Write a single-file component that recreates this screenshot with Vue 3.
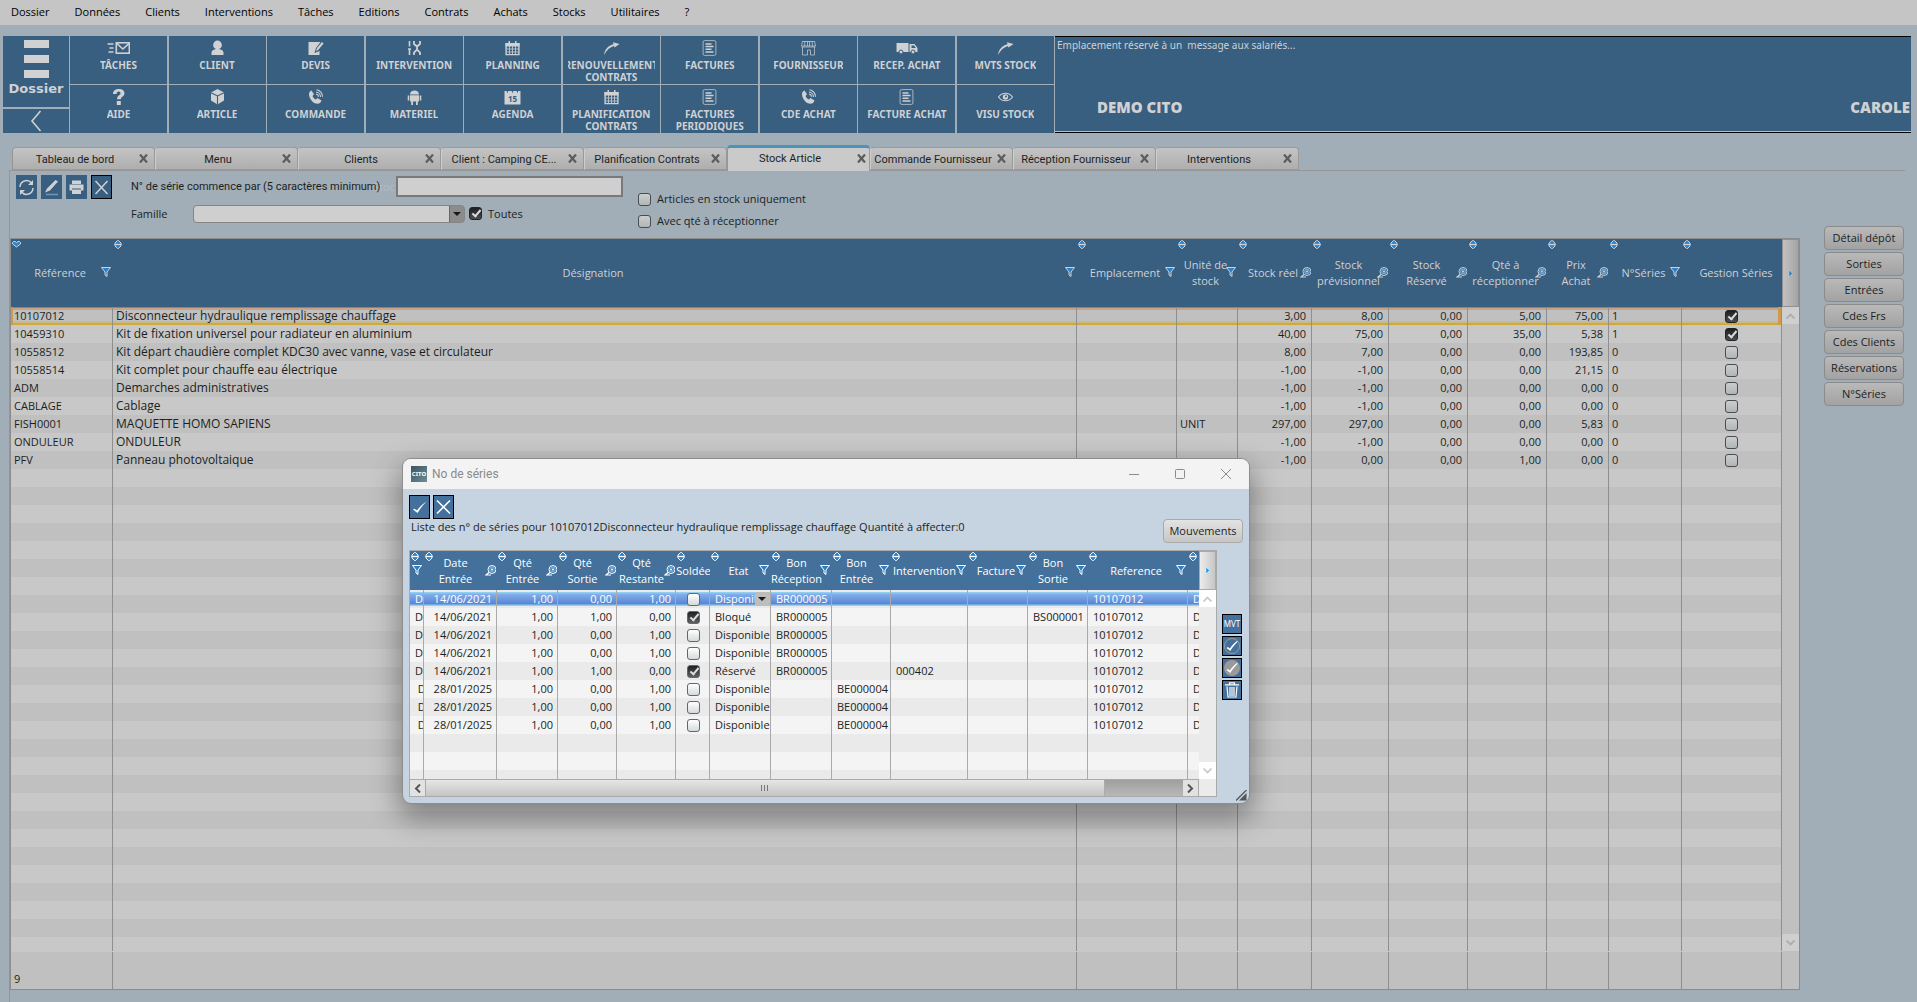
<script setup>
import { ref } from 'vue'

const icons = {
  mail: '<path d="M0 4h6M2 8h4M1 12h5" stroke="currentColor" stroke-width="1.600"/><rect x="8.800" y="2.800" width="13" height="10.400" fill="none" stroke="currentColor" stroke-width="1.600"/><path d="M9 3l6.300 6L22 3" fill="none" stroke="currentColor" stroke-width="1.600"/>',
  user: '<circle cx="11" cy="5" r="4.400" fill="currentColor"/><path d="M5 15v-2c0-3 3-4 6-4s6 1 6 4v2z" fill="currentColor"/>',
  quote: '<path d="M4 2h12l-4.500 6-1.500 5 4-1.500 1-1V15H4z" fill="currentColor"/><path d="M11.500 11.500l1-3.500 5-6 1.600 1.400-5 6.200z" fill="currentColor"/>',
  tools: '<path d="M6 1v5.500M6 9v6M4.500 9h3" fill="none" stroke="currentColor" stroke-width="1.600"/><path d="M10.500 1v3l3 2.500 3-2.500V1M10.500 15v-2.500l3-3 3 3V15M13.500 6v4" fill="none" stroke="currentColor" stroke-width="1.800"/>',
  calendar: '<path d="M4.600 3.600h12.800v11H4.600z" fill="none" stroke="currentColor" stroke-width="1.400"/><path d="M4 3h14v3.500H4zM7 1h1.500v3H7zM13.500 1H15v3h-1.500z" fill="currentColor"/><path d="M5 9h12M5 12h12M8 6v8M11 6v8M14 6v8" stroke="currentColor" stroke-width=".8"/>',
  share: '<path d="M3.500 15C4 9.500 8.500 5 13 4.300L12.500 2.300l6.500 1.700-5 3.400-.5-1.500C9.500 7 6 10 3.500 15z" fill="currentColor"/>',
  doc: '<rect x="4.600" y=".6" width="12.800" height="14.800" rx="1.500" fill="none" stroke="currentColor" stroke-width="1" opacity=".75"/><path d="M7 4h6M7 6.600h8M7 9.200h6M7 12h8" stroke="currentColor" stroke-width="1.500"/>',
  shop: '<path d="M5 1.500h12M5 1l-1 5h14l-1-5M7.500 1L7 6M10 1v5M12 1v5M14.500 1l.5 5M5 7v8h5v-5h3v5h4V7M4 7h14" fill="none" stroke="currentColor" stroke-width="1" opacity=".7"/>',
  truck: '<path d="M1 3h12v9H1zM14 4h5l3 4v4h-8z" fill="currentColor"/><path d="M16 5.500h2.500l1.800 2.500H16z" fill="#385e80"/><circle cx="5.500" cy="12" r="2" fill="currentColor" stroke="#385e80"/><circle cx="17.500" cy="12" r="2" fill="currentColor" stroke="#385e80"/>',
  help: '<path d="M5.500 5C5.500 1.500 8 0 11.300 0c3.200 0 5.700 1.500 5.700 4.300 0 3.300-3.700 3.500-3.700 6H9.500c0-3.700 3.500-4 3.500-6 0-1-.8-1.800-1.900-1.800-1.300 0-2 .9-2 2.500zM9.300 12h4v4h-4z" fill="currentColor"/>',
  cube: '<path d="M11 0l6.500 3.500v8L11 15.500l-6.500-4v-8z" fill="currentColor"/><path d="M4.500 3.800L11 7l6.500-3.200M11 7v8.500" fill="none" stroke="#385e80" stroke-width="1.100"/>',
  phone: '<path d="M4.500 5c0-1.500 1-3 2.500-3.500l2.500 3.800L8 7c.5 1.500 2 3 3.500 3.500L13 9l4 2.500c-.6 2-2 3.300-4 3.300C8.500 14.800 4.500 9.500 4.500 5z" fill="currentColor"/><path d="M11.500 5a3 3 0 0 1 2.500 2.800M11.500 3a5 5 0 0 1 4.500 5M12 .8a7 7 0 0 1 6 7" fill="none" stroke="currentColor" stroke-width="1.100"/>',
  android: '<path d="M6.500 5.500C6.500 3 8.500 1.500 11 1.500s4.500 1.500 4.500 4zM6.500 6.200h9v6.300h-1.200V16h-1.800v-3.500h-3V16H7.700v-3.500H6.500zM4.200 6.500h1.600v5H4.200zM16.200 6.500h1.600v5h-1.600z" fill="currentColor"/>',
  agenda: '<path d="M3 2h16v13.500H3z" fill="currentColor"/><path d="M6 0v3.500M11 0v3.500M16 0v3.500" stroke="#385e80" stroke-width="1.200"/><text x="11" y="13" text-anchor="middle" font-family="Noto Sans" font-weight="700" font-size="8" fill="#385e80">15</text>',
  eye: '<path d="M4 8c3.500-5 10.500-5 14 0-3.500 5-10.500 5-14 0z" fill="none" stroke="currentColor" stroke-width="1.100"/><circle cx="11" cy="8" r="2.700" fill="currentColor"/><circle cx="11.500" cy="7.500" r="1" fill="#385e80"/>',
}

const menu = ['Dossier', 'Données', 'Clients', 'Interventions', 'Tâches', 'Editions', 'Contrats', 'Achats', 'Stocks', 'Utilitaires', '?']

const tools = [
  ['mail', 'TÂCHES'], ['user', 'CLIENT'], ['quote', 'DEVIS'], ['tools', 'INTERVENTION'], ['calendar', 'PLANNING'],
  ['share', 'RENOUVELLEMENT\nCONTRATS'], ['doc', 'FACTURES'], ['shop', 'FOURNISSEUR'], ['truck', 'RECEP. ACHAT'], ['share', 'MVTS STOCK'],
  ['help', 'AIDE'], ['cube', 'ARTICLE'], ['phone', 'COMMANDE'], ['android', 'MATERIEL'], ['agenda', 'AGENDA'],
  ['calendar', 'PLANIFICATION\nCONTRATS'], ['doc', 'FACTURES\nPERIODIQUES'], ['phone', 'CDE ACHAT'], ['doc', 'FACTURE ACHAT'], ['eye', 'VISU STOCK'],
]

const tabs = ['Tableau de bord', 'Menu', 'Clients', 'Client : Camping CE...', 'Planification Contrats', 'Stock Article', 'Commande Fournisseur', 'Réception Fournisseur', 'Interventions']
const activeTab = ref('Stock Article')

const cols = [
  { t: 'Référence', w: 102, f: 'funnel', sorted: true },
  { t: 'Désignation', f: 'funnel', cls: 'wide' },
  { t: 'Emplacement', w: 100, f: 'funnel' },
  { t: 'Unité de\nstock', w: 61, f: 'funnel' },
  { t: 'Stock réel', w: 74, f: 'lens', cls: 'num' },
  { t: 'Stock\nprévisionnel', w: 77, f: 'lens', cls: 'num' },
  { t: 'Stock\nRéservé', w: 79, f: 'lens', cls: 'num' },
  { t: 'Qté à\nréceptionner', w: 79, f: 'lens', cls: 'num' },
  { t: 'Prix\nAchat', w: 62, f: 'lens', cls: 'num' },
  { t: 'N°Séries', w: 73, f: 'funnel' },
  { t: 'Gestion Séries', w: 100, cls: 'check' },
]

const rows = [
  ['10107012', 'Disconnecteur hydraulique remplissage chauffage', '', '', '3,00', '8,00', '0,00', '5,00', '75,00', '1', true],
  ['10459310', 'Kit de fixation universel pour radiateur en aluminium', '', '', '40,00', '75,00', '0,00', '35,00', '5,38', '1', true],
  ['10558512', 'Kit départ chaudière complet KDC30 avec vanne, vase et circulateur', '', '', '8,00', '7,00', '0,00', '0,00', '193,85', '0', false],
  ['10558514', 'Kit complet pour chauffe eau électrique', '', '', '-1,00', '-1,00', '0,00', '0,00', '21,15', '0', false],
  ['ADM', 'Demarches administratives', '', '', '-1,00', '-1,00', '0,00', '0,00', '0,00', '0', false],
  ['CABLAGE', 'Cablage', '', '', '-1,00', '-1,00', '0,00', '0,00', '0,00', '0', false],
  ['FISH0001', 'MAQUETTE HOMO SAPIENS', '', 'UNIT', '297,00', '297,00', '0,00', '0,00', '5,83', '0', false],
  ['ONDULEUR', 'ONDULEUR', '', '', '-1,00', '-1,00', '0,00', '0,00', '0,00', '0', false],
  ['PFV', 'Panneau photovoltaique', '', '', '-1,00', '0,00', '0,00', '1,00', '0,00', '0', false],
]
const emptyRows = 27

const side = ['Détail dépôt', 'Sorties', 'Entrées', 'Cdes Frs', 'Cdes Clients', 'Réservations', 'N°Séries']

const serialCols = [
  { t: '', w: 14, f: 'funnel', cls: 'cut' },
  { t: 'Date\nEntrée', w: 73, f: 'lens', cls: 'num' },
  { t: 'Qté\nEntrée', w: 61, f: 'lens', cls: 'num' },
  { t: 'Qté\nSortie', w: 59, f: 'lens', cls: 'num' },
  { t: 'Qté\nRestante', w: 59, f: 'lens', cls: 'num' },
  { t: 'Soldée', w: 34, cls: 'check' },
  { t: 'Etat', w: 61, f: 'funnel' },
  { t: 'Bon\nRéception', w: 61, f: 'funnel', tight: true },
  { t: 'Bon\nEntrée', w: 59, f: 'funnel', tight: true },
  { t: 'Intervention', w: 77, f: 'funnel', tight: true },
  { t: 'Facture', w: 60, f: 'funnel' },
  { t: 'Bon\nSortie', w: 60, f: 'funnel', tight: true },
  { t: 'Reference', w: 100, f: 'funnel' },
  { t: '', w: 11 },
]

const serials = [
  ['D', '14/06/2021', '1,00', '0,00', '1,00', false, 'Disponible', 'BR000005', '', '', '', '', '10107012', 'D'],
  ['D', '14/06/2021', '1,00', '1,00', '0,00', true, 'Bloqué', 'BR000005', '', '', '', 'BS000001', '10107012', 'D'],
  ['D', '14/06/2021', '1,00', '0,00', '1,00', false, 'Disponible', 'BR000005', '', '', '', '', '10107012', 'D'],
  ['D', '14/06/2021', '1,00', '0,00', '1,00', false, 'Disponible', 'BR000005', '', '', '', '', '10107012', 'D'],
  ['D', '14/06/2021', '1,00', '1,00', '0,00', true, 'Réservé', 'BR000005', '', '000402', '', '', '10107012', 'D'],
  [' D', '28/01/2025', '1,00', '0,00', '1,00', false, 'Disponible', '', 'BE000004', '', '', '', '10107012', 'D'],
  [' D', '28/01/2025', '1,00', '0,00', '1,00', false, 'Disponible', '', 'BE000004', '', '', '', '10107012', 'D'],
  [' D', '28/01/2025', '1,00', '0,00', '1,00', false, 'Disponible', '', 'BE000004', '', '', '', '10107012', 'D'],
]

const glyphs = {
  funnel: '<path d="M.5.5h9L6 5v4.500L4 8V5z" fill="#2f7fc4" stroke="currentColor"/>',
  lens: '<circle cx="7" cy="4.500" r="4" fill="none" stroke="currentColor"/><circle cx="7" cy="4.500" r="2.400" fill="#2f86cf" stroke="#7fb4dd"/><circle cx="7" cy="4.500" r="1" fill="currentColor"/><path d="M4 7.500L1 10h5" fill="none" stroke="currentColor" stroke-width="1.200"/>',
  sort: '<path d="M3.500.5h1L7 3v3L4.500 8.500h-1L1 6V3z" fill="#2f86cf" stroke="currentColor"/><path d="M.5 4.500h7" stroke="currentColor" stroke-width="1.200"/>',
  down: '<path d="M.5 2.500l1-1h1.500l1.500 1 1.500-1h1.500l1 1V4l-4 3-4-3z" fill="#2f86cf" stroke="currentColor"/>',
}
</script>

<template>
  <div class="app">
    <nav class="menubar">
      <button v-for="m in menu" :key="m">{{ m }}</button>
    </nav>

    <header class="ribbon">
      <div class="home">
        <button class="folder"><i></i><i></i><i></i><span>Dossier</span></button>
        <button class="back" aria-label="Retour">
          <svg width="12" height="22" viewBox="0 0 12 22"><path d="M10.500 1L2 11l8.500 10" fill="none" stroke="currentColor" stroke-width="1.600" /></svg>
        </button>
      </div>
      <div class="tools">
        <button v-for="([icon, label], i) in tools" :key="i">
          <svg width="23" height="16" viewBox="0 0 22 16" v-html="icons[icon]"></svg>
          <span>{{ label }}</span>
        </button>
      </div>
      <div class="message">
        <p>Emplacement réservé à un&nbsp; message aux salariés...</p>
        <div class="who"><strong>DEMO CITO</strong><strong>CAROLE</strong></div>
      </div>
    </header>

    <div class="tabs">
      <div v-for="t in tabs" :key="t" class="tab" :class="{ active: t === activeTab }">
        <button class="name" @click="activeTab = t">{{ t }}</button>
        <button class="close" aria-label="Fermer">
          <svg width="9" height="9" viewBox="0 0 9 9"><path d="M1 .5l7 8M8 .5l-7 8" stroke="currentColor" stroke-width="2.200" /></svg>
        </button>
      </div>
    </div>

    <main class="page">
      <form class="filters" @submit.prevent>
        <div class="actions">
          <button aria-label="Actualiser"><svg width="17" height="17" viewBox="0 0 17 17"><path d="M2 8a6.500 6.500 0 0 1 11.500-4M15 9A6.500 6.500 0 0 1 3.500 13" fill="none" stroke="currentColor" stroke-width="1.500" /><path d="M15 1v5h-5zM2 16v-5h5z" fill="currentColor" /></svg></button>
          <button aria-label="Modifier"><svg width="17" height="17" viewBox="0 0 17 17"><path d="M2 13.500l2-4L12.500 1l2.500 1.500-8 9z" fill="currentColor" /><path d="M3 15.500h12" stroke="#7796b1" stroke-width="1.500" /></svg></button>
          <button aria-label="Imprimer"><svg width="17" height="17" viewBox="0 0 17 17"><path d="M4 1.500h9V5H4zM1.500 5.500h14v6h-2.500V9.500H4v2H1.500zM4 10.500h9v4.500H4z" fill="currentColor" /></svg></button>
          <button class="framed" aria-label="Fermer"><svg width="17" height="17" viewBox="0 0 17 17"><path d="M2.500 2l12 13M14.500 2l-12 13" stroke="currentColor" stroke-width="1.500" /></svg></button>
        </div>
        <div class="fields">
          <div class="line">
            <span class="ghost">Stoc</span>
            <label for="serie" class="long">N° de série commence par (5 caractères minimum)</label>
            <input id="serie" type="text">
          </div>
          <div class="line">
            <label for="famille" class="short">Famille</label>
            <div class="drop"><select id="famille"><option></option></select></div>
            <label class="tick"><input type="checkbox" checked>Toutes</label>
          </div>
        </div>
        <div class="options">
          <label class="tick"><input type="checkbox">Articles en stock uniquement</label>
          <label class="tick"><input type="checkbox">Avec qté à réceptionner</label>
        </div>
      </form>

      <div class="content">
        <section class="grid">
          <div class="sheet">
            <div class="body">
              <table>
                <colgroup><col v-for="c in cols" :key="c.t" :style="c.w ? { width: c.w + 'px' } : null"></colgroup>
                <thead>
                  <tr>
                    <th v-for="c in cols" :key="c.t">
                      <div class="head" :class="{ bare: !c.f }">
                        <svg class="sort" width="9" height="9" viewBox="0 0 9 9" v-html="c.sorted ? glyphs.down : glyphs.sort"></svg>
                        <span>{{ c.t }}</span>
                        <svg v-if="c.f" class="filter" width="11" height="11" viewBox="0 0 11 11" v-html="glyphs[c.f]"></svg>
                      </div>
                    </th>
                  </tr>
                </thead>
                <tbody>
                  <tr v-for="(r, i) in rows" :key="i" :class="{ current: i === 0 }">
                    <td v-for="(v, j) in r" :key="j" :class="cols[j].cls">
                      <input v-if="typeof v === 'boolean'" type="checkbox" :checked="v" aria-label="Gestion Séries">
                      <template v-else>{{ v }}</template>
                    </td>
                  </tr>
                  <tr v-for="n in emptyRows" :key="'e' + n"><td v-for="c in cols" :key="c.t"></td></tr>
                </tbody>
              </table>
            </div>
            <table class="total">
              <colgroup><col v-for="c in cols" :key="c.t" :style="c.w ? { width: c.w + 'px' } : null"></colgroup>
              <tbody><tr><td v-for="(c, j) in cols" :key="c.t">{{ j ? '' : rows.length }}</td></tr></tbody>
            </table>
          </div>
          <div class="vscroll">
            <button class="corner" aria-label="Colonnes"><svg width="5" height="7" viewBox="0 0 5 7"><path d="M1 0l3.500 3.500L1 7z" fill="#2f7fc4" stroke="#d5d5d5" stroke-width=".5" /></svg></button>
            <button class="arrow" aria-label="Haut"><svg width="9" height="6" viewBox="0 0 9 6"><path d="M.5 5.500l4-4 4 4" fill="none" stroke="currentColor" stroke-width="1.800" /></svg></button>
            <span class="track"></span>
            <button class="arrow" aria-label="Bas"><svg width="9" height="6" viewBox="0 0 9 6"><path d="M.5.5l4 4 4-4" fill="none" stroke="currentColor" stroke-width="1.800" /></svg></button>
            <span class="end"></span>
          </div>
        </section>
        <aside class="side">
          <button v-for="s in side" :key="s" class="soft">{{ s }}</button>
        </aside>
      </div>
    </main>

    <section class="window" role="dialog" aria-label="No de séries">
      <header class="title">
        <span class="logo">CITO</span>
        <h2>No de séries</h2>
        <button aria-label="Réduire"><svg width="12" height="12" viewBox="0 0 12 12"><path d="M1 6.500h10" stroke="currentColor" /></svg></button>
        <button aria-label="Agrandir"><svg width="12" height="12" viewBox="0 0 12 12"><rect x="1.500" y="1.500" width="9" height="9" rx="1" fill="none" stroke="currentColor" /></svg></button>
        <button aria-label="Fermer"><svg width="12" height="12" viewBox="0 0 12 12"><path d="M1 1l10 10M11 1L1 11" stroke="currentColor" /></svg></button>
      </header>
      <div class="top">
        <div>
          <div class="confirm">
            <button aria-label="Valider"><svg width="17" height="18" viewBox="0 0 17 18"><path d="M2 11.500l1.500-.8 2.500 1.800C8.500 9 12 5.500 15.500 3.500 12 7 9 11 6.500 15z" fill="currentColor" /></svg></button>
            <button aria-label="Annuler"><svg width="17" height="18" viewBox="0 0 17 18"><path d="M2 2.500l13 13M15 2.500l-13 13" stroke="currentColor" stroke-width="1.600" /></svg></button>
          </div>
          <p>Liste des n° de séries pour 10107012Disconnecteur hydraulique remplissage chauffage Quantité à affecter:0</p>
        </div>
        <button class="soft">Mouvements</button>
      </div>
      <div class="bottom">
        <div class="grid light">
          <div class="sheet">
            <div class="body">
              <table>
                <colgroup><col v-for="(c, j) in serialCols" :key="j" :style="{ width: c.w + 'px' }"></colgroup>
                <thead>
                  <tr>
                    <th v-for="(c, j) in serialCols" :key="j">
                      <div class="head" :class="{ bare: !c.f, aside: c.f === 'lens' || c.tight }">
                        <svg class="sort" width="9" height="9" viewBox="0 0 9 9" v-html="glyphs.sort"></svg>
                        <span>{{ c.t }}</span>
                        <svg v-if="c.f" class="filter" width="11" height="11" viewBox="0 0 11 11" v-html="glyphs[c.f]"></svg>
                      </div>
                    </th>
                  </tr>
                </thead>
                <tbody>
                  <tr v-for="(r, i) in serials" :key="i" :class="{ chosen: i === 0 }">
                    <td v-for="(v, j) in r" :key="j" :class="serialCols[j].cls">
                      <input v-if="typeof v === 'boolean'" type="checkbox" :checked="v" aria-label="Soldée">
                      <div v-else-if="i === 0 && j === 6" class="drop"><select aria-label="Etat"><option>{{ v }}</option></select></div>
                      <template v-else>{{ v }}</template>
                    </td>
                  </tr>
                  <tr v-for="n in 3" :key="'e' + n"><td v-for="(c, j) in serialCols" :key="j"></td></tr>
                </tbody>
              </table>
            </div>
            <div class="hscroll">
              <button aria-label="Gauche"><svg width="7" height="9" viewBox="0 0 7 9"><path d="M6 .5l-4 4 4 4" fill="none" stroke="currentColor" stroke-width="2" /></svg></button>
              <span class="thumb"><svg width="8" height="6" viewBox="0 0 8 6"><path d="M.5 0v6M3.500 0v6M6.500 0v6" stroke="currentColor" /></svg></span>
              <span class="rail"></span>
              <button aria-label="Droite"><svg width="7" height="9" viewBox="0 0 7 9"><path d="M1 .5l4 4-4 4" fill="none" stroke="currentColor" stroke-width="2" /></svg></button>
            </div>
          </div>
          <div class="vscroll">
            <button class="corner" aria-label="Colonnes"><svg width="5" height="7" viewBox="0 0 5 7"><path d="M1 0l3.500 3.500L1 7z" fill="#1e96e6" stroke="#fff" stroke-width=".5" /></svg></button>
            <button class="arrow" aria-label="Haut"><svg width="9" height="6" viewBox="0 0 9 6"><path d="M.5 5.500l4-4 4 4" fill="none" stroke="currentColor" stroke-width="1.800" /></svg></button>
            <span class="track"></span>
            <button class="arrow" aria-label="Bas"><svg width="9" height="6" viewBox="0 0 9 6"><path d="M.5.5l4 4 4-4" fill="none" stroke="currentColor" stroke-width="1.800" /></svg></button>
            <span class="end"></span>
          </div>
        </div>
        <div class="rowtools">
          <button>MVT</button>
          <button aria-label="Débloquer"><svg width="18" height="18" viewBox="0 0 18 18"><circle cx="9" cy="9" r="7.500" fill="none" stroke="#9a9a9a" /><path d="M3.500 11l1.300-1 2 1.400C9 8.500 11.500 6 14 4l.8.6C12 7.500 9.500 10.500 7.300 14z" fill="currentColor" /></svg></button>
          <button aria-label="Bloquer"><svg width="18" height="18" viewBox="0 0 18 18"><circle cx="9" cy="9" r="8" fill="#9a9a9a" /><path d="M3.500 11l1.300-1 2 1.400C9 8.500 11.500 6 14 4l.8.6C12 7.500 9.500 10.500 7.300 14z" fill="currentColor" /></svg></button>
          <button aria-label="Supprimer"><svg width="18" height="18" viewBox="0 0 18 18"><path d="M2 3.800h14M6.500 3.500V1.800h5v1.700M4 5.500L5 16h8l1-10.500M7 6v9M9 6v9M11 6v9" fill="none" stroke="currentColor" stroke-width="1.200" /></svg></button>
        </div>
      </div>
      <svg class="grip" width="11" height="11" viewBox="0 0 11 11"><path d="M10.500 3v7.500H3z" fill="#555" /><path d="M0 10.500L10.500 0" stroke="#555" stroke-width="1.300" /></svg>
    </section>
  </div>
</template>

<style>
body { margin: 0; background: #a1adb7; }
</style>

<style scoped>
.app {
  --blue: #385e80;
  --ink: #1c1f22;
  position: relative;
  display: flex;
  flex-direction: column;
  height: 100vh;
  overflow: hidden;
  background: #a1adb7;
  color: var(--ink);
  font: 11px/16px "Open Sans", "Noto Sans", sans-serif;
}
button, input, select { font: inherit; color: inherit; border: 0; padding: 0; margin: 0; background: none; border-radius: 0; }
p, h2 { margin: 0; font: inherit; }
svg { display: block; flex: none; }

.menubar { display: flex; gap: 25px; height: 25px; flex: none; padding-left: 11px; background: #c5c5c5; color: #000; }
.menubar button { padding-bottom: 2px; }

.ribbon { display: flex; flex: none; height: 97px; margin: 11px 6px 0 3px; gap: 1px; color: #cfd1d3; }
.home { display: flex; flex-direction: column; gap: 2px; width: 66px; }
.home button { background: var(--blue); }
.folder { display: flex; flex-direction: column; align-items: center; height: 71px; padding-top: 4px; }
.folder i { width: 25px; height: 8px; margin-bottom: 7px; background: #cfd1d3; }
.folder span { margin-top: -4px; font: bold 13px/16px "DejaVu Sans", sans-serif; }
.back { flex: 1; display: grid; place-items: center; }
.tools { display: grid; grid-template-columns: repeat(10, 97px); grid-auto-rows: 48px; gap: 1px; justify-content: space-between; width: 984px; flex: none; }
.tools button { display: flex; flex-direction: column; align-items: center; gap: 3px; padding: 4px 5px 0; background: var(--blue); overflow: hidden; }
.tools span { max-width: 87px; display: flex; justify-content: center; overflow: hidden; text-align: center; white-space: pre; font: bold 10px/12px "Noto Sans", sans-serif; }
.message { flex: 1; display: flex; flex-direction: column; justify-content: space-between; box-sizing: border-box; border-top: 1px solid #000; border-bottom: 1px solid #000; box-shadow: inset 0 -1px #b9c0c4; background: var(--blue); font: 10px/14px "Noto Sans", sans-serif; }
.message p { padding: 1px 2px; }
.who { display: flex; justify-content: space-between; padding: 0 1px 15px 42px; font: bold 15px/20px "Open Sans", sans-serif; }

.tabs { display: flex; flex: none; align-items: flex-end; height: 26px; margin: 12px 12px 0 9px; padding-left: 3px; box-shadow: inset 0 -1px #959595; }
.tab { display: flex; box-sizing: border-box; width: 143px; height: 23px; margin-bottom: 1px; border: 1px solid #9a9a9a; border-left-color: #cdcdcd; border-radius: 4px 4px 0 0; background: linear-gradient(#c4c4c4, #aeaeae); font-family: Roboto, sans-serif; }
.tab:first-child { border-left-color: #959595; }
.name { flex: 1; min-width: 0; padding-top: 2px; white-space: nowrap; }
.close { display: flex; width: 17px; padding: 6px 0 0 2px; color: #5c5c5c; }
.active { height: 26px; margin-bottom: 0; border-top: 3px solid #4b93b8; border-bottom: 0; border-left-color: #959595; background: #cacaca; }
.active .name { padding: 0 3px 2px 0; }
.active .close { width: 14px; }

.page { flex: 1; min-height: 0; display: flex; flex-direction: column; margin-left: 9px; border-left: 1px solid #959595; }
.filters { display: flex; flex: none; height: 67px; }
.actions { display: flex; gap: 4px; padding: 4px 0 0 6px; }
.actions button { display: grid; place-items: center; box-sizing: border-box; width: 21px; height: 24px; background: var(--blue); color: #cfd1d3; }
.actions .framed { border: 1px solid #000; }
.fields { width: 507px; padding: 5px 0 0 19px; }
.line { position: relative; display: flex; align-items: center; height: 21px; margin-bottom: 6px; }
.long { position: relative; width: 265px; white-space: nowrap; font-family: Roboto, sans-serif; }
.line input[type=text] { position: relative; box-sizing: border-box; width: 227px; height: 21px; border: 2px solid #77797d; background: #cfcfcf; }
.short { width: 62px; }
.line .tick { margin-left: 4px; }
.ghost { position: absolute; left: 242px; color: #b3bcc4; font-size: 11px; }
.drop { position: relative; }
.drop::after { content: ""; position: absolute; right: 4px; top: 50%; margin-top: -2px; border: solid transparent; border-width: 4px 4px 0; border-top-color: #1a1a1a; pointer-events: none; }
select { display: block; appearance: none; }
#famille { width: 272px; height: 18px; border: 1px solid #858585; border-radius: 4px; background: linear-gradient(90deg, #cfcfcf calc(100% - 15px), #666 calc(100% - 15px), #666 calc(100% - 14px), #8c8c8c calc(100% - 14px)); }
.tick { display: flex; align-items: center; gap: 6px; white-space: nowrap; }
.options { padding-top: 20px; }
.options .tick { height: 16px; margin-bottom: 6px; }

input[type=checkbox] { appearance: none; position: relative; flex: none; box-sizing: border-box; width: 13px; height: 13px; margin: 0; border: 1px solid #4a4d50; border-radius: 3px; background: linear-gradient(#cdcdcd, #b0b6b8); }
input[type=checkbox]:checked { border-color: #222; background: linear-gradient(#1d1f22, #4c4f52); }
input[type=checkbox]:checked::after { content: ""; position: absolute; left: 4px; top: 0; width: 3px; height: 7px; border: solid #dcdcdc; border-width: 0 2px 2px 0; transform: rotate(40deg); }

.content { flex: 1; min-height: 0; display: flex; gap: 24px; padding: 0 13px 12px 0; }
.grid { flex: 1; min-width: 0; display: flex; border: 1px solid #8c8c8c; }
.sheet { flex: 1; min-width: 0; display: flex; flex-direction: column; }
.body { flex: 1; min-height: 0; overflow: hidden; }
table { width: 100%; table-layout: fixed; border-collapse: separate; border-spacing: 0; }
th { position: relative; height: 68px; padding: 0; background: var(--blue); color: #cfd1d3; font-weight: normal; }
.head { display: flex; justify-content: center; text-align: center; white-space: pre; padding-right: 4px; }
.bare { padding: 0 0 0 8px; }
.sort { position: absolute; left: 1px; top: 1px; }
.filter { position: absolute; right: 1px; top: 50%; margin-top: -6px; }
td { box-sizing: border-box; height: 18px; padding: 0 5px 0 3px; border-right: 1px solid #8f8f8f; overflow: hidden; white-space: pre; line-height: 16px; }
tbody tr:nth-child(odd) { background: #c0c0c0; }
tbody tr:nth-child(even) { background: #c8c8c8; }
.num { text-align: right; }
.wide { font-size: 12px; }
td.check { padding: 0; }
td input[type=checkbox] { display: block; margin: 0 auto; }
.current td { background: linear-gradient(#a77b57 0 1px, #cda283 1px 3px, #0000 3px 14px, #cbbb80 14px 16px, #cfaa38 16px); }
.current td:first-child { box-shadow: inset 2px 0 #d09a4c; }
.current td:last-child { box-shadow: inset -3px 0 #d09a4c; }
.total { flex: none; border-top: 1px solid #c8c8c8; }
.total td { height: 37px; vertical-align: bottom; padding-bottom: 2px; }
.vscroll { display: flex; flex-direction: column; width: 17px; background: #c0c0c0; }
.vscroll button { display: grid; place-items: center; }
.corner { box-sizing: border-box; height: 68px; border: 1px solid #909090; background: linear-gradient(90deg, #c2c2c2, #a4a4a4); }
.arrow { height: 17px; background: #cfcfcf; color: #adadad; }
.track { flex: 1; }
.end { height: 38px; }

.side { display: flex; flex-direction: column; gap: 2px; width: 80px; margin-top: -12px; }
.soft { box-sizing: border-box; width: 80px; height: 24px; border: 1px solid #8b8b8b; border-radius: 4px; background: linear-gradient(#b9b9b9, #a2a2a2); }

.window { position: absolute; left: 403px; top: 459px; width: 846px; border-radius: 8px; overflow: hidden; background: #c6d3e0; box-shadow: 0 0 0 1px #8d8d8d, 0 12px 28px 4px rgba(0, 0, 0, .35); --blue: #44719b; }
.title { display: flex; align-items: center; height: 30px; padding-left: 8px; background: #f3f3f3; color: #8a8a8a; }
.logo { width: 16px; height: 16px; background: linear-gradient(135deg, #3d5560, #6b8d96); color: #fff; font: bold 6px/16px "Noto Sans", sans-serif; text-align: center; }
.title h2 { flex: 1; margin-left: 5px; font: 12px/16px Roboto, sans-serif; }
.title button { display: grid; place-items: center; width: 46px; height: 30px; }
.top { display: flex; align-items: flex-end; justify-content: space-between; padding: 6px 6px 7px; }
.confirm { display: flex; gap: 3px; }
.confirm button, .rowtools button { display: grid; place-items: center; box-sizing: border-box; border: 1px solid #000; background: var(--blue); color: #fff; }
.confirm button { width: 21px; height: 24px; }
.top p { padding: 0 0 8px 2px; }
.window .soft { border-color: #aaa; background: linear-gradient(#e3e3e3, #c6c6c6); }
.bottom { display: flex; gap: 5px; padding: 0 7px 6px 6px; }
.light { border-color: #aaa; }
.light .body { flex: none; height: 228px; }
.light th { height: 39px; color: #fff; }
.light .head { padding: 0 4px 0 0; }
.light .aside { padding-right: 10px; }
.light .bare { padding: 0 0 0 1px; }
.light td { border-color: #aaa; padding: 0 4px 0 5px; }
.light td.check { padding: 0 0 0 1px; }
.light td.cut { padding-right: 0; }
.light tbody tr:nth-child(odd) { background: #eaeaea; }
.light tbody tr:nth-child(even) { background: #f4f4f4; }
.light .chosen td { background: linear-gradient(#eaeaea 0 2px, #8fd0f2 2px 3px, #86aee9 4px, #5585d6 14px, #8fd0f2 15px 16px, #eaeaea 16px); color: #fff; }
.light td:last-child { border-right: 0; padding-right: 0; }
.chosen .drop { margin-right: -4px; }
.chosen select { width: 100%; height: 14px; padding-right: 15px; line-height: 14px; background: linear-gradient(90deg, #0000 calc(100% - 15px), #bdbdbd calc(100% - 15px)); }
.light input[type=checkbox] { background: linear-gradient(#fff, #d4dadb); border-color: #64686b; }
.light input[type=checkbox]:checked { background: linear-gradient(#1d1f22, #5c6063); }
.light .vscroll { background: #ebebeb; }
.light .corner { height: 39px; border-color: #aaa; background: linear-gradient(90deg, #ececec, #c6c6c6); }
.light .arrow { background: #fff; color: #ccc; }
.light .end { height: 17px; }
.hscroll { display: flex; height: 17px; box-sizing: border-box; border: 1px solid #aaa; border-left: 0; border-bottom: 0; }
.hscroll button { display: grid; place-items: center; width: 15px; background: #e2e2e2; color: #555; }
.thumb { flex: 1; display: grid; place-items: center; border: solid #aaa; border-width: 0 1px; background: linear-gradient(#e6e6e6, #c4c4c4); color: #777; }
.rail { width: 78px; background: linear-gradient(#9f9f9f, #b8b8b8); }
.rowtools { display: flex; flex-direction: column; gap: 2px; width: 20px; padding-top: 64px; }
.rowtools button { width: 20px; height: 20px; font: 8px/16px "Noto Sans", sans-serif; }
.grip { position: absolute; right: 2px; bottom: 2px; }
</style>
